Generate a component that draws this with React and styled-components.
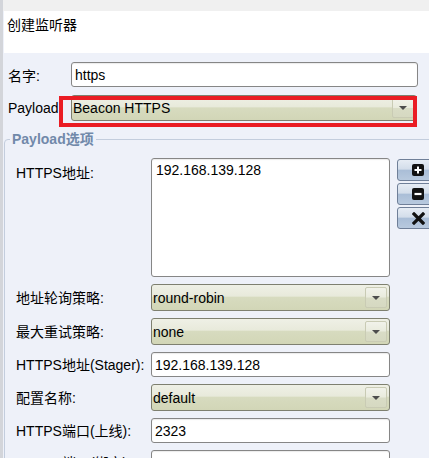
import styled, { createGlobalStyle } from "styled-components";

const GlobalStyle = createGlobalStyle`
  html, body {
    margin: 0;
    padding: 0;
    background: #eef1f9;
  }
  body {
    font-family: "Liberation Sans", "Noto Sans CJK SC", sans-serif;
    font-size: 14px;
    color: #000;
  }
`;

const Window = styled.div`
  width: 429px;
  height: 458px;
  overflow: hidden;
  box-sizing: border-box;
  border-left: 3px solid #d3d5da;
  background: #eef1f9;
  display: flex;
  flex-direction: column;
`;

const TopStrip = styled.div`
  height: 11px;
  flex: none;
  background: #f0f0f0;
`;

const TitlePanel = styled.div`
  height: 42px;
  flex: none;
  box-sizing: border-box;
  margin-left: 1px;
  padding: 6px 3px 0;
  background: #fff;
  line-height: 16px;
`;

const Form = styled.div`
  padding-top: 9px;
  display: flex;
  flex-direction: column;
  gap: 8px;
`;

const TopRow = styled.div`
  position: relative;
  display: flex;
  align-items: center;
  margin: 0 12px 0 5px;
`;

const TopLabel = styled.div`
  width: 63px;
  flex: none;
  white-space: nowrap;
`;

const TextBox = styled.div`
  box-sizing: border-box;
  width: ${(p) => p.$w || "auto"};
  flex: ${(p) => (p.$w ? "none" : "1")};
  height: ${(p) => p.$h || 25}px;
  border: 1px solid #868686;
  border-radius: 3px;
  background: #fff;
  box-shadow: inset 0 1px 1px rgba(0, 0, 0, 0.08);
  padding: ${(p) => (p.$multi ? "3px 4px" : "0 3px")};
  display: flex;
  align-items: ${(p) => (p.$multi ? "flex-start" : "center")};
  white-space: nowrap;
`;

const SelectBox = styled.div`
  box-sizing: border-box;
  width: ${(p) => p.$w || "auto"};
  flex: ${(p) => (p.$w ? "none" : "1")};
  height: ${(p) => p.$h || 27}px;
  border: 1px solid #7e8070;
  border-radius: 3px;
  background: linear-gradient(#eff0e6 0%, #e8eadb 44%, #d7dbbf 50%, #d2d6b7 100%);
  display: flex;
  align-items: center;
  padding-left: 1px;
`;

const SelectValue = styled.div`
  flex: 1;
  white-space: nowrap;
`;

const ArrowBtn = styled.div`
  box-sizing: border-box;
  width: 22px;
  height: calc(100% - 4px);
  margin-right: 2px;
  border: 1px solid #c9cbb4;
  border-radius: 2px;
  background: linear-gradient(#f1f2ea 0%, #e9ebdd 48%, #d9dcc6 52%, #d6d9c1 100%);
  display: flex;
  align-items: center;
  justify-content: center;

  &::after {
    content: "";
    border-left: 4px solid transparent;
    border-right: 4px solid transparent;
    border-top: 4px solid #4d4d4d;
  }
`;

const RedMark = styled.div`
  position: absolute;
  left: 51px;
  top: 1px;
  width: 358px;
  height: 31px;
  box-sizing: border-box;
  border: 4px solid #ea1c24;
  pointer-events: none;
`;

const Fieldset = styled.fieldset`
  margin: 2px -30px 0 1px;
  padding: 11px 0 0 11px;
  border: 1px solid #c3cddd;
  border-radius: 4px;
  min-width: 0;
`;

const Legend = styled.legend`
  margin-left: -6px;
  padding: 0 2px;
  font-weight: bold;
  color: #7189aa;
  line-height: 16px;
`;

const Grid = styled.div`
  display: flex;
  flex-direction: column;
  gap: 7px;
`;

const Row = styled.div`
  display: flex;
  align-items: ${(p) => (p.$top ? "flex-start" : "center")};
`;

const Label = styled.div`
  width: 135px;
  flex: none;
  white-space: nowrap;
  padding-top: ${(p) => (p.$top ? "7px" : "0")};
  line-height: 16px;
`;

const ButtonStack = styled.div`
  display: flex;
  flex-direction: column;
  gap: 2px;
  margin: 1px 0 0 7px;
`;

const ToolButton = styled.div`
  box-sizing: border-box;
  width: 40px;
  height: 22px;
  border: 1px solid #6f7f98;
  border-radius: 3px;
  background: linear-gradient(#e6ecf4 0%, #d3ddea 45%, #aabed7 52%, #b8c9de 100%);
  display: flex;
  align-items: center;
  padding-left: 14px;
`;

const PlusIcon = () => (
  <svg width="12" height="12" viewBox="0 0 12 12">
    <rect x="0" y="0" width="12" height="12" rx="2" fill="#111" />
    <path d="M6 2.5v7M2.5 6h7" stroke="#fff" strokeWidth="2" />
  </svg>
);

const MinusIcon = () => (
  <svg width="12" height="12" viewBox="0 0 12 12">
    <rect x="0" y="0" width="12" height="12" rx="2" fill="#111" />
    <path d="M2.5 6h7" stroke="#fff" strokeWidth="2.2" />
  </svg>
);

const CrossIcon = () => (
  <svg width="13" height="13" viewBox="0 0 13 13">
    <path d="M2 2l9 9M11 2l-9 9" stroke="#111" strokeWidth="3.2" strokeLinecap="square" />
  </svg>
);

const Select = ({ value, w, h }) => (
  <SelectBox $w={w} $h={h}>
    <SelectValue>{value}</SelectValue>
    <ArrowBtn />
  </SelectBox>
);

export default function App() {
  return (
    <>
      <GlobalStyle />
      <Window>
        <TopStrip />
        <TitlePanel>创建监听器</TitlePanel>
        <Form>
          <TopRow>
            <TopLabel>名字:</TopLabel>
            <TextBox $w="347px">https</TextBox>
          </TopRow>
          <TopRow>
            <TopLabel>Payload</TopLabel>
            <Select value="Beacon HTTPS" h={26} />
            <RedMark />
          </TopRow>
          <Fieldset>
            <Legend>Payload选项</Legend>
            <Grid>
              <Row $top>
                <Label $top>HTTPS地址:</Label>
                <TextBox $w="239px" $h={119} $multi>
                  192.168.139.128
                </TextBox>
                <ButtonStack>
                  <ToolButton>
                    <PlusIcon />
                  </ToolButton>
                  <ToolButton>
                    <MinusIcon />
                  </ToolButton>
                  <ToolButton>
                    <CrossIcon />
                  </ToolButton>
                </ButtonStack>
              </Row>
              <Row>
                <Label>地址轮询策略:</Label>
                <Select value="round-robin" w="239px" />
              </Row>
              <Row>
                <Label>最大重试策略:</Label>
                <Select value="none" w="239px" />
              </Row>
              <Row>
                <Label>HTTPS地址(Stager):</Label>
                <TextBox $w="239px">192.168.139.128</TextBox>
              </Row>
              <Row>
                <Label>配置名称:</Label>
                <Select value="default" w="239px" />
              </Row>
              <Row>
                <Label>HTTPS端口(上线):</Label>
                <TextBox $w="239px">2323</TextBox>
              </Row>
              <Row>
                <Label>HTTPS端口(绑定):</Label>
                <TextBox $w="239px" />
              </Row>
            </Grid>
          </Fieldset>
        </Form>
      </Window>
    </>
  );
}
